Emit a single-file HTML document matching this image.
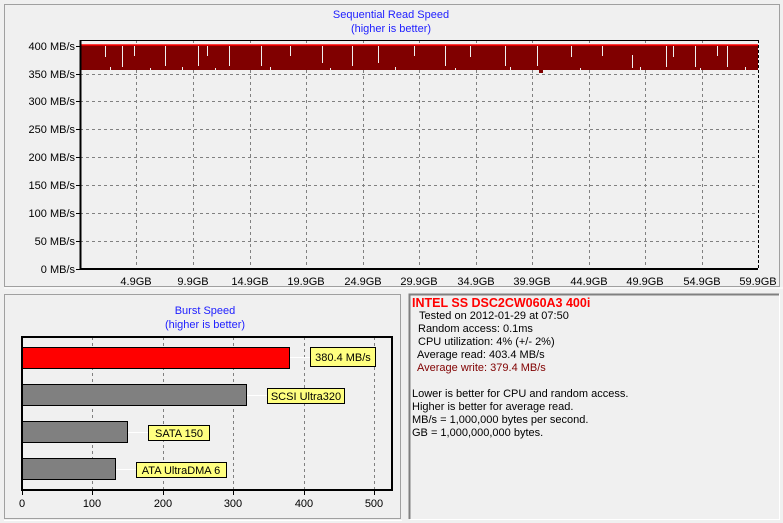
<!DOCTYPE html>
<html><head><meta charset="utf-8"><style>
body{margin:0;width:783px;height:523px;background:#f0f0f0;overflow:hidden;font-family:"Liberation Sans",sans-serif;}
svg text{font-family:"Liberation Sans",sans-serif;font-size:11px;}
.info{position:absolute;left:412px;top:297px;font-size:11px;line-height:13px;color:#000;white-space:pre;}
.info div{height:13px}
.i1{padding-left:7px}.i2{padding-left:6px}.i3{padding-left:5px}
</style></head><body>
<svg width="783" height="523" style="position:absolute;left:0;top:0">
<rect x="4.5" y="4.5" width="775" height="282" fill="#f0f0f0" stroke="#a0a0a0"/>
<line x1="4" y1="288" x2="783" y2="288" stroke="#fff"/>
<text x="391" y="18" text-anchor="middle" fill="#2020ff">Sequential Read Speed</text>
<text x="391" y="32" text-anchor="middle" fill="#2020ff">(higher is better)</text>
<g stroke="#808080" stroke-dasharray="3,3">
<line x1="80" x2="758" y1="74.5" y2="74.5"/><line x1="80" x2="758" y1="101.5" y2="101.5"/><line x1="80" x2="758" y1="129.5" y2="129.5"/><line x1="80" x2="758" y1="157.5" y2="157.5"/><line x1="80" x2="758" y1="185.5" y2="185.5"/><line x1="80" x2="758" y1="213.5" y2="213.5"/><line x1="80" x2="758" y1="241.5" y2="241.5"/>
<line y1="40" y2="269" x1="136.5" x2="136.5"/><line y1="40" y2="269" x1="193.5" x2="193.5"/><line y1="40" y2="269" x1="250.5" x2="250.5"/><line y1="40" y2="269" x1="306.5" x2="306.5"/><line y1="40" y2="269" x1="363.5" x2="363.5"/><line y1="40" y2="269" x1="419.5" x2="419.5"/><line y1="40" y2="269" x1="476.5" x2="476.5"/><line y1="40" y2="269" x1="532.5" x2="532.5"/><line y1="40" y2="269" x1="589.5" x2="589.5"/><line y1="40" y2="269" x1="645.5" x2="645.5"/><line y1="40" y2="269" x1="702.5" x2="702.5"/>
</g>
<rect x="81" y="45" width="677" height="25" fill="#800000"/>
<g stroke="#f0f0f0">
<line x1="110.5" x2="110.5" y1="67" y2="70"/><line x1="150.5" x2="150.5" y1="68" y2="70"/><line x1="182.5" x2="182.5" y1="67" y2="70"/><line x1="215.5" x2="215.5" y1="68" y2="70"/><line x1="270.5" x2="270.5" y1="67" y2="70"/><line x1="330.5" x2="330.5" y1="68" y2="70"/><line x1="395.5" x2="395.5" y1="67" y2="70"/><line x1="455.5" x2="455.5" y1="68" y2="70"/><line x1="510.5" x2="510.5" y1="67" y2="70"/><line x1="580.5" x2="580.5" y1="68" y2="70"/><line x1="640.5" x2="640.5" y1="67" y2="70"/><line x1="700.5" x2="700.5" y1="68" y2="70"/><line x1="745.5" x2="745.5" y1="67" y2="70"/>
</g>
<rect x="539" y="70" width="4" height="3" fill="#800000"/>
<line x1="81" x2="758" y1="45" y2="45" stroke="#ff0000" stroke-width="1.5"/>
<g stroke="#f0f0f0" stroke-width="1">
<line x1="105.5" x2="105.5" y1="46" y2="57"/><line x1="122.5" x2="122.5" y1="46" y2="67"/><line x1="134.5" x2="134.5" y1="46" y2="56"/><line x1="165.5" x2="165.5" y1="46" y2="66"/><line x1="198.5" x2="198.5" y1="46" y2="66"/><line x1="207.5" x2="207.5" y1="46" y2="56"/><line x1="229.5" x2="229.5" y1="46" y2="66"/><line x1="261.5" x2="261.5" y1="46" y2="66"/><line x1="290.5" x2="290.5" y1="46" y2="56"/><line x1="322.5" x2="322.5" y1="46" y2="63"/><line x1="352.5" x2="352.5" y1="46" y2="66"/><line x1="378.5" x2="378.5" y1="46" y2="63"/><line x1="414.5" x2="414.5" y1="46" y2="56"/><line x1="445.5" x2="445.5" y1="46" y2="66"/><line x1="470.5" x2="470.5" y1="46" y2="57"/><line x1="505.5" x2="505.5" y1="46" y2="66"/><line x1="537.5" x2="537.5" y1="46" y2="66"/><line x1="571.5" x2="571.5" y1="46" y2="57"/><line x1="602.5" x2="602.5" y1="46" y2="56"/><line x1="632.5" x2="632.5" y1="55" y2="68"/><line x1="666.5" x2="666.5" y1="46" y2="67"/><line x1="673.5" x2="673.5" y1="46" y2="57"/><line x1="695.5" x2="695.5" y1="46" y2="67"/><line x1="717.5" x2="717.5" y1="46" y2="56"/><line x1="727.5" x2="727.5" y1="46" y2="67"/>
</g>
<path d="M80.5 40 V269 H758" fill="none" stroke="#000" stroke-width="2"/>
<line x1="80" y1="40.5" x2="758" y2="40.5" stroke="#000"/>
<line x1="758.5" y1="40" x2="758.5" y2="269" stroke="#000" stroke-dasharray="3,2"/>
<g fill="#000" text-anchor="end">
<text x="75" y="50">400 MB/s</text><text x="75" y="78">350 MB/s</text><text x="75" y="105">300 MB/s</text><text x="75" y="133">250 MB/s</text><text x="75" y="161">200 MB/s</text><text x="75" y="189">150 MB/s</text><text x="75" y="217">100 MB/s</text><text x="75" y="245">50 MB/s</text><text x="75" y="273">0 MB/s</text>
</g>
<g stroke="#000"><line x1="76" x2="80" y1="46.5" y2="46.5"/><line x1="76" x2="80" y1="74.5" y2="74.5"/><line x1="76" x2="80" y1="101.5" y2="101.5"/><line x1="76" x2="80" y1="129.5" y2="129.5"/><line x1="76" x2="80" y1="157.5" y2="157.5"/><line x1="76" x2="80" y1="185.5" y2="185.5"/><line x1="76" x2="80" y1="213.5" y2="213.5"/><line x1="76" x2="80" y1="241.5" y2="241.5"/><line x1="76" x2="80" y1="269.5" y2="269.5"/></g>
<g fill="#000" text-anchor="middle">
<text x="136" y="285">4.9GB</text><text x="193" y="285">9.9GB</text><text x="250" y="285">14.9GB</text><text x="306" y="285">19.9GB</text><text x="363" y="285">24.9GB</text><text x="419" y="285">29.9GB</text><text x="476" y="285">34.9GB</text><text x="532" y="285">39.9GB</text><text x="589" y="285">44.9GB</text><text x="645" y="285">49.9GB</text><text x="702" y="285">54.9GB</text><text x="758" y="285">59.9GB</text>
</g>
<rect x="4.5" y="294.5" width="396" height="224" fill="#f0f0f0" stroke="#a0a0a0"/>
<line x1="4" y1="520.5" x2="402" y2="520.5" stroke="#fff"/>
<text x="205" y="314" text-anchor="middle" fill="#2020ff">Burst Speed</text>
<text x="205" y="328" text-anchor="middle" fill="#2020ff">(higher is better)</text>
<g stroke="#808080" stroke-dasharray="3,3">
<line x1="92.5" x2="92.5" y1="337" y2="490"/><line x1="163.5" x2="163.5" y1="337" y2="490"/><line x1="233.5" x2="233.5" y1="337" y2="490"/><line x1="304.5" x2="304.5" y1="337" y2="490"/><line x1="374.5" x2="374.5" y1="337" y2="490"/>
</g>
<rect x="22" y="337" width="370" height="153" fill="none" stroke="#000" stroke-width="2"/>
<g stroke="#fff"><line x1="290" x2="310" y1="357.5" y2="357.5"/><line x1="246" x2="267" y1="395.5" y2="395.5"/><line x1="127" x2="148" y1="432.5" y2="432.5"/><line x1="115" x2="136" y1="469.5" y2="469.5"/></g>
<rect x="22.5" y="347.5" width="267" height="21" fill="#ff0000" stroke="#000"/>
<rect x="22.5" y="384.5" width="224" height="21" fill="#808080" stroke="#000"/>
<rect x="22.5" y="421.5" width="105" height="21" fill="#808080" stroke="#000"/>
<rect x="22.5" y="458.5" width="93" height="21" fill="#808080" stroke="#000"/>
<g fill="#ffff80" stroke="#000"><rect x="310.5" y="347.5" width="65" height="19"/><rect x="267.5" y="388.5" width="77" height="15"/><rect x="148.5" y="425.5" width="61" height="15"/><rect x="136.5" y="462.5" width="90" height="15"/></g>
<g fill="#000" text-anchor="middle"><text x="343" y="361">380.4 MB/s</text><text x="306" y="400">SCSI Ultra320</text><text x="179" y="437">SATA 150</text><text x="181" y="474">ATA UltraDMA 6</text></g>
<g stroke="#000"><line x1="22.5" x2="22.5" y1="490" y2="495"/><line x1="92.5" x2="92.5" y1="490" y2="495"/><line x1="163.5" x2="163.5" y1="490" y2="495"/><line x1="233.5" x2="233.5" y1="490" y2="495"/><line x1="304.5" x2="304.5" y1="490" y2="495"/><line x1="374.5" x2="374.5" y1="490" y2="495"/></g>
<g fill="#000" text-anchor="middle"><text x="22" y="507">0</text><text x="92" y="507">100</text><text x="163" y="507">200</text><text x="233" y="507">300</text><text x="304" y="507">400</text><text x="374" y="507">500</text></g>
<path d="M409.5 519 V294.5 H779" fill="none" stroke="#808080" stroke-width="2"/>
<path d="M410 519.5 H779.5 V294" fill="none" stroke="#fff"/>
</svg>
<div class="info"><div style="color:#ff0000;font-weight:bold;font-size:12.5px">INTEL SS DSC2CW060A3 400i</div><div class="i1">Tested on 2012-01-29 at 07:50</div><div class="i2">Random access: 0.1ms</div><div class="i2">CPU utilization: 4% (+/- 2%)</div><div class="i3">Average read: 403.4 MB/s</div><div class="i3" style="color:#800000">Average write: 379.4 MB/s</div><div></div><div>Lower is better for CPU and random access.</div><div>Higher is better for average read.</div><div>MB/s = 1,000,000 bytes per second.</div><div>GB = 1,000,000,000 bytes.</div></div>
</body></html>
